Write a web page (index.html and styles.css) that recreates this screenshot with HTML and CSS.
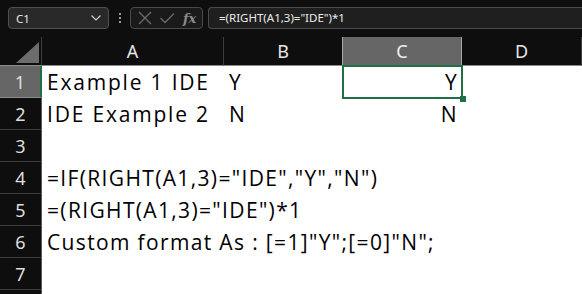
FILE: index.html
```html
<!DOCTYPE html>
<html>
<head>
<meta charset="utf-8">
<link rel="stylesheet" href="styles.css">
</head>
<body>
<div class="app">
  <div class="fbar">
    <div class="namebox">
      <span class="nb-text">C1</span>
      <svg class="chev" width="12" height="8" viewBox="0 0 12 8"><path d="M1.5 1.5 L6 6 L10.5 1.5" fill="none" stroke="#cfcfcf" stroke-width="1.2"/></svg>
    </div>
    <div class="vdots"><span></span><span></span><span></span></div>
    <div class="btns">
      <svg width="16" height="16" viewBox="0 0 16 16"><path d="M2 2 L14 14 M14 2 L2 14" stroke="#6a6a6a" stroke-width="1.3" fill="none"/></svg>
      <svg width="16" height="16" viewBox="0 0 16 16"><path d="M1.5 8 L6 12.5 L15 3.5" stroke="#6a6a6a" stroke-width="1.3" fill="none"/></svg>
      <span class="fx">fx</span>
    </div>
    <div class="finput">=(RIGHT(A1,3)="IDE")*1</div>
  </div>
  <div class="sheet">
    <div class="corner"><div class="tri"></div></div>
    <div class="ch">A</div>
    <div class="ch">B</div>
    <div class="ch ch-sel">C</div>
    <div class="ch">D</div>

    <div class="rh rh-sel">1</div>
    <div class="cell wide">Example 1 IDE</div>
    <div class="cell">Y</div>
    <div class="cell num sel">Y</div>
    <div class="cell"></div>

    <div class="rh">2</div>
    <div class="cell wide">IDE Example 2</div>
    <div class="cell">N</div>
    <div class="cell num">N</div>
    <div class="cell"></div>

    <div class="rh">3</div>
    <div class="cell"></div><div class="cell"></div><div class="cell"></div><div class="cell"></div>

    <div class="rh">4</div>
    <div class="cell">=IF(RIGHT(A1,3)="IDE","Y","N")</div>
    <div class="cell"></div><div class="cell"></div><div class="cell"></div>

    <div class="rh">5</div>
    <div class="cell">=(RIGHT(A1,3)="IDE")*1</div>
    <div class="cell"></div><div class="cell"></div><div class="cell"></div>

    <div class="rh">6</div>
    <div class="cell">Custom format As : [=1]"Y";[=0]"N";</div>
    <div class="cell"></div><div class="cell"></div><div class="cell"></div>

    <div class="rh">7</div>
    <div class="cell"></div><div class="cell"></div><div class="cell"></div><div class="cell"></div>

    <div class="rh"></div>
    <div class="cell"></div><div class="cell"></div><div class="cell"></div><div class="cell"></div>
  </div>
</div>
</body>
</html>
```
FILE: styles.css
```css
html, body {
  margin: 0;
  padding: 0;
  background: #0e0e0e;
}
.app {
  width: 582px;
  height: 294px;
  overflow: hidden;
  font-family: "Noto Sans", sans-serif;
}
.fbar {
  height: 37px;
  box-sizing: border-box;
  padding: 7px 0 0 8px;
  display: flex;
  align-items: flex-start;
  white-space: nowrap;
}
.namebox {
  width: 101px;
  height: 22px;
  box-sizing: border-box;
  background: #292929;
  border: 1px solid #4f4f4f;
  border-radius: 4px;
  display: flex;
  align-items: center;
  justify-content: space-between;
  padding: 0 6px 0 7px;
  color: #e8e8e8;
  font-size: 11.5px;
}
.vdots {
  width: 21px;
  height: 22px;
  display: flex;
  flex-direction: column;
  align-items: center;
  justify-content: center;
  gap: 2px;
}
.vdots span {
  width: 2px;
  height: 2px;
  background: #9a9a9a;
}
.btns {
  width: 73px;
  height: 22px;
  box-sizing: border-box;
  border: 1px solid #4a4a4a;
  border-radius: 4px;
  background: #1a1a1a;
  display: flex;
  align-items: center;
  padding: 0 4px 0 6px;
  gap: 6px;
}
.fx {
  font-family: "DejaVu Serif", serif;
  font-style: italic;
  font-weight: bold;
  color: #8a8a8a;
  font-size: 13px;
  margin-left: 2px;
}
.finput {
  margin-left: 5px;
  flex: 1;
  height: 22px;
  box-sizing: border-box;
  border: 1px solid #4a4a4a;
  border-right: none;
  border-radius: 4px 0 0 4px;
  background: #1f1f1f;
  color: #ececec;
  font-size: 11.5px;
  line-height: 20px;
  padding-left: 10px;
}
.sheet {
  display: grid;
  grid-template-columns: 42px 182px 119px 119px 120px;
  grid-template-rows: 29px repeat(8, 32px);
  background: #ffffff;
}
.corner {
  background: #0e0e0e;
  border-bottom: 1px solid #8c8c8c;
  border-right: 1px solid #3c3c3c;
  position: relative;
}
.tri {
  position: absolute;
  right: 2px;
  bottom: 2px;
  width: 0;
  height: 0;
  border-style: solid;
  border-width: 0 0 21px 23px;
  border-color: transparent transparent #6c6c6c transparent;
}
.ch {
  background: #0e0e0e;
  color: #e6e6e6;
  font-size: 18px;
  display: flex;
  align-items: center;
  justify-content: center;
  border-bottom: 1px solid #8c8c8c;
  border-right: 1px solid #3c3c3c;
}
.ch-sel {
  background: #666666;
  border-left: 1px solid #a8a8a8;
  border-right: 1px solid #a8a8a8;
  margin-left: -1px;
  color: #f0f0f0;
}
.rh {
  background: #0e0e0e;
  color: #dedede;
  font-size: 18px;
  display: flex;
  align-items: center;
  justify-content: center;
  border-bottom: 1px solid #3c3c3c;
  border-right: 1px solid #5a5a5a;
  box-sizing: border-box;
}
.rh-sel {
  background: #666666;
  border-right: 2px solid #1e7145;
  border-bottom-color: #8c8c8c;
}
.cell {
  font-family: "Open Sans", sans-serif;
  font-size: 21px;
  letter-spacing: 1.35px;
  color: #000;
  white-space: nowrap;
  display: flex;
  align-items: center;
  padding: 0 5px 0 5px;
  min-width: 0;
  overflow: visible;
}
.wide {
  letter-spacing: 1.8px;
}
.num {
  justify-content: flex-end;
  padding-right: 4px;
}
.sel {
  position: relative;
  outline: 2px solid #1e7145;
  outline-offset: -1px;
}
.sel::after {
  content: "";
  position: absolute;
  right: -4px;
  bottom: -4px;
  width: 6px;
  height: 6px;
  background: #1e7145;
}
```
